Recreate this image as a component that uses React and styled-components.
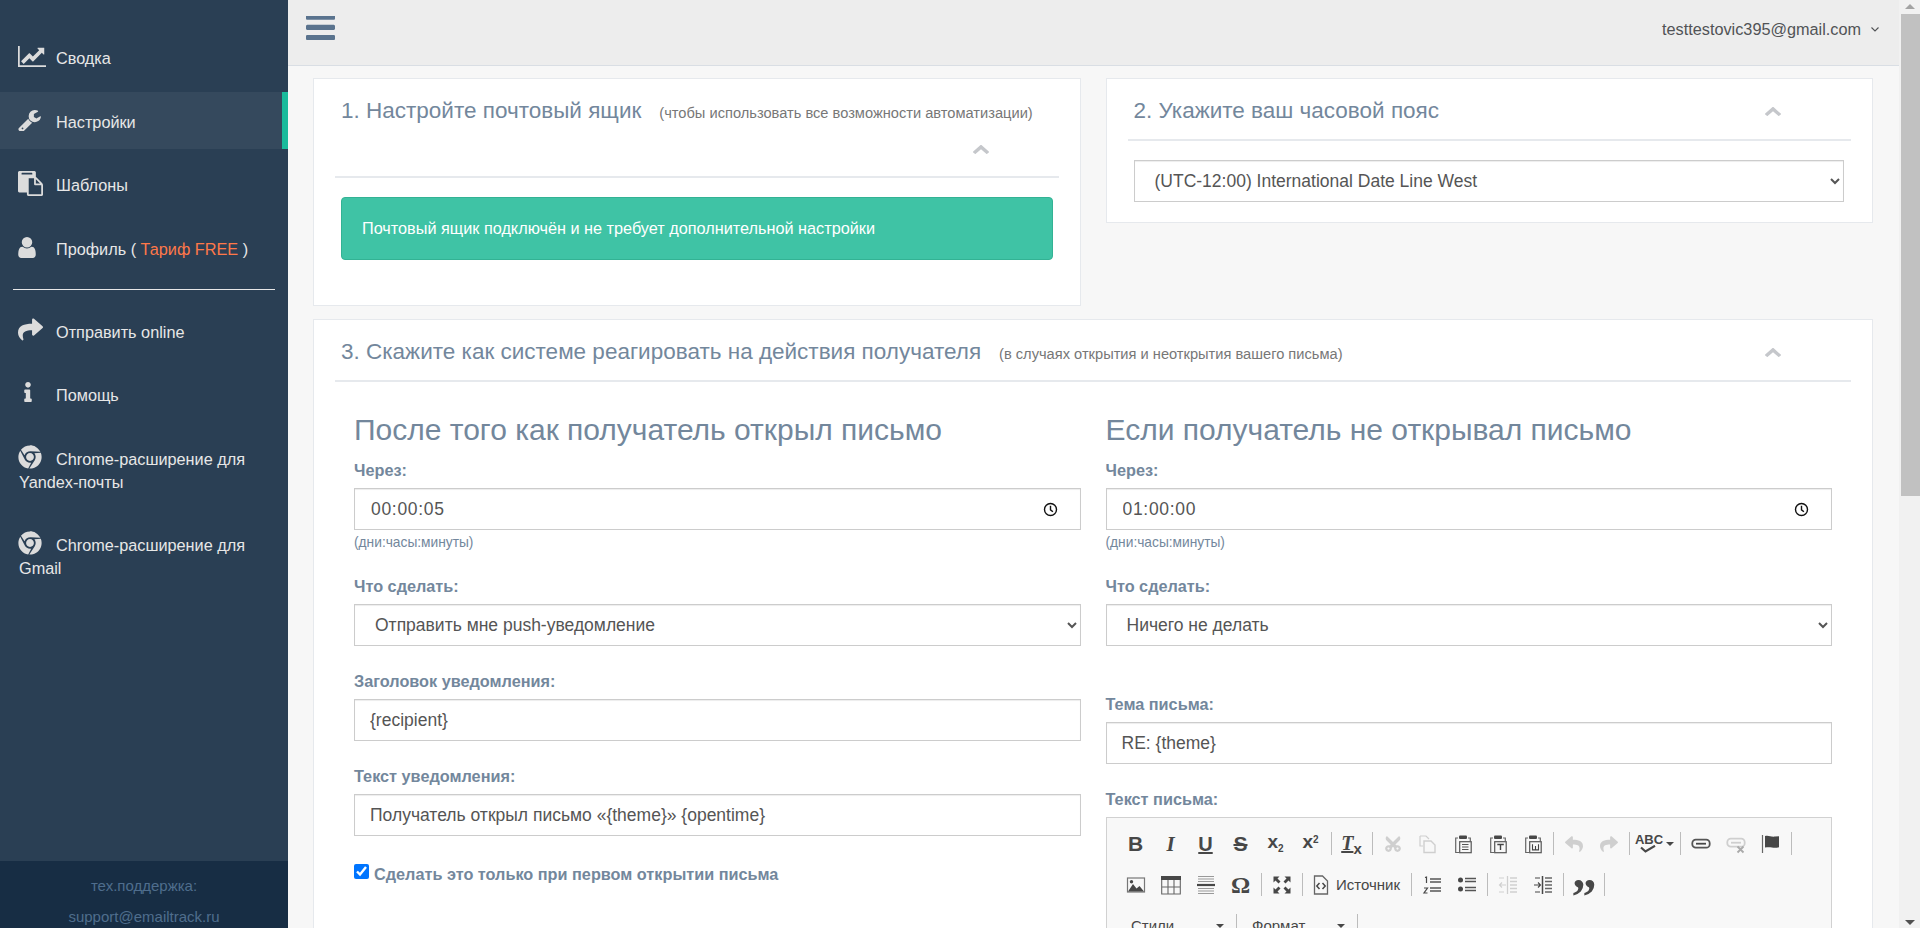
import React from 'react'
import styled, { createGlobalStyle } from 'styled-components'
import { FaShare, FaInfo, FaChrome, FaReply, FaCut } from 'react-icons/fa'

const GlobalStyle = createGlobalStyle`
  html, body { margin:0; padding:0; height:100%; overflow:hidden; }
  body { font-family:"Liberation Sans", Arial, sans-serif; background:#f7f7f7; color:#73879c; }
  * { box-sizing:border-box; }
`

const Fa = ({ d, box = '0 0 1792 1792', ...rest }) => (
  <svg viewBox={box} fill="currentColor" {...rest}><path d={d} /></svg>
)

const CHART = 'M2048 1536v128h-2048v-1536h128v1408h1920zm-128-1248v435q0 21-19.5 29.5t-35.5-7.5l-121-121-633 633q-10 10-23 10t-23-10l-233-233-416 416-192-192 585-585q10-10 23-10t23 10l233 233 464-464-121-121q-16-16-7.5-35.5t29.5-19.5h435q14 0 23 9t9 23z'
const WRENCH = 'M448 1472q0-26-19-45t-45-19-45 19-19 45 19 45 45 19 45-19 19-45zm644-420l-682 682q-37 37-90 37-52 0-91-37l-106-108q-38-36-38-90 0-53 38-91l681-681q39 98 114.5 173.5t173.5 114.5zm634-435q0 39-23 106-47 134-164.5 217.5t-258.5 83.5q-185 0-316.5-131.5t-131.5-316.5 131.5-316.5 316.5-131.5q58 0 121.5 16.5t107.5 46.5q16 11 16 28t-16 28l-293 169v224l193 107q5-3 79-48.5t135.5-81 70.5-35.5q15 0 23.5 10t8.5 25z'
const PASTE = 'M768 1664h896v-640h-416q-40 0-68-28t-28-68v-416h-384v1152zm256-1440v-64q0-13-9.5-22.5t-22.5-9.5h-704q-13 0-22.5 9.5t-9.5 22.5v64q0 13 9.5 22.5t22.5 9.5h704q13 0 22.5-9.5t9.5-22.5zm256 672h299l-299-299v299zm512 128v672q0 40-28 68t-68 28h-960q-40 0-68-28t-28-68v-160h-544q-40 0-68-28t-28-68v-1344q0-40 28-68t68-28h1088q40 0 68 28t28 68v328q21 13 36 28l408 408q28 28 48 76t20 88z'
const USER = 'M1536 1399q0 109-62.5 187t-150.5 78h-854q-88 0-150.5-78t-62.5-187q0-85 8.5-160.5t31.5-152 58.5-131 94-89 134.5-34.5q131 128 313 128t313-128q76 0 134.5 34.5t94 89 58.5 131 31.5 152 8.5 160.5zm-256-887q0 159-112.5 271.5t-271.5 112.5-271.5-112.5-112.5-271.5 112.5-271.5 271.5-112.5 271.5 112.5 112.5 271.5z'
const BARS = 'M1664 1344v128q0 26-19 45t-45 19h-1408q-26 0-45-19t-19-45v-128q0-26 19-45t45-19h1408q26 0 45 19t19 45zm0-512v128q0 26-19 45t-45 19h-1408q-26 0-45-19t-19-45v-128q0-26 19-45t45-19h1408q26 0 45 19t19 45zm0-512v128q0 26-19 45t-45 19h-1408q-26 0-45-19t-19-45v-128q0-26 19-45t45-19h1408q26 0 45 19t19 45z'
const CHEVRON = 'M1683 1331l-166 165q-19 19-45 19t-45-19l-531-531-531 531q-19 19-45 19t-45-19l-166-165q-19-19-19-45.5t19-45.5l742-741q19-19 45-19t45 19l742 741q19 19 19 45.5t-19 45.5z'

const App = () => (
  <Shell>
    <GlobalStyle />
    <Sidebar>
      <Nav>
        <NavItem>
          <NavIcon $top={-3}><Fa d={CHART} box="0 0 2048 1792" width="28" height="25" /></NavIcon>Сводка
        </NavItem>
        <NavItem $active>
          <NavIcon $top={-1}><Fa d={WRENCH} box="64 128 1662 1536" width="23" height="21" /></NavIcon>Настройки
        </NavItem>
        <NavItem>
          <NavIcon $top={-3}><Fa d={PASTE} width="25" height="25" /></NavIcon>Шаблоны
        </NavItem>
        <NavItem>
          <NavIcon $top={-1}><Fa d={USER} box="256 128 1280 1536" width="18" height="21" /></NavIcon>Профиль ( <Tariff>Тариф FREE</Tariff> )
        </NavItem>
        <NavRule />
        <NavItem>
          <NavIcon $top={-4}><FaShare size={25} /></NavIcon>Отправить online
        </NavItem>
        <NavItem>
          <NavIcon $top={-2}><FaInfo size={20} /></NavIcon>Помощь
        </NavItem>
        <NavItem>
          <NavIcon $top={-3}><FaChrome size={24} /></NavIcon>Chrome-расширение для Yandex-почты
        </NavItem>
        <NavItem>
          <NavIcon $top={-3}><FaChrome size={24} /></NavIcon>Chrome-расширение для Gmail
        </NavItem>
      </Nav>
      <SupportBox>
        <div>тех.поддержка:</div>
        <div>support@emailtrack.ru</div>
      </SupportBox>
    </Sidebar>

    <Main>
      <TopBar>
        <BurgerIcon d={BARS} box="128 320 1536 1216" width="29" height="24" preserveAspectRatio="none" />
        <UserMenu>
          testtestovic395@gmail.com
          <svg width="8" height="5" viewBox="0 0 8 5" fill="none" stroke="currentColor" strokeWidth="1.1"><path d="M.5.5 4 4 7.5.5" /></svg>
        </UserMenu>
      </TopBar>

      <Content>
        <Panel>
          <PanelHead>
            <PanelTitle>1. Настройте почтовый ящик<TitleNote>(чтобы использовать все возможности автоматизации)</TitleNote></PanelTitle>
            <Collapse />
          </PanelHead>
          <SuccessBox>Почтовый ящик подключён и не требует дополнительной настройки</SuccessBox>
        </Panel>

        <Panel>
          <PanelHead>
            <PanelTitle>2. Укажите ваш часовой пояс</PanelTitle>
            <Collapse />
          </PanelHead>
          <ZoneSelect defaultValue="-12">
            <option value="-12">(UTC-12:00) International Date Line West</option>
          </ZoneSelect>
        </Panel>

        <WidePanel>
          <PanelHead>
            <PanelTitle>3. Скажите как системе реагировать на действия получателя<TitleNote>(в случаях открытия и неоткрытия вашего письма)</TitleNote></PanelTitle>
            <Collapse />
          </PanelHead>
          <Columns>
            <div>
              <ColumnTitle>После того как получатель открыл письмо</ColumnTitle>
              <Field label="Через:" hint>
                <TimeField value="00:00:05" />
              </Field>
              <Field label="Что сделать:">
                <Select defaultValue="push">
                  <option value="push">Отправить мне push-уведомление</option>
                </Select>
              </Field>
              <Field label="Заголовок уведомления:">
                <TextInput defaultValue="{recipient}" />
              </Field>
              <Field label="Текст уведомления:">
                <TextInput defaultValue="Получатель открыл письмо «{theme}» {opentime}" />
              </Field>
              <CheckRow>
                <input type="checkbox" defaultChecked />
                Сделать это только при первом открытии письма
              </CheckRow>
            </div>
            <div>
              <ColumnTitle>Если получатель не открывал письмо</ColumnTitle>
              <Field label="Через:" hint>
                <TimeField value="01:00:00" />
              </Field>
              <Field label="Что сделать:" $extra>
                <Select defaultValue="none">
                  <option value="none">Ничего не делать</option>
                </Select>
              </Field>
              <Field label="Тема письма:">
                <TextInput defaultValue="RE: {theme}" />
              </Field>
              <FieldLabel>Текст письма:</FieldLabel>
              <Editor />
            </div>
          </Columns>
        </WidePanel>
      </Content>
    </Main>

    <ScrollBar>
      <ScrollUp />
      <ScrollThumb />
      <ScrollDown />
    </ScrollBar>
  </Shell>
)

export default App

const Collapse = () => (
  <CollapseBox>
    <Fa d={CHEVRON} box="90 256 1612 1259" width="16" height="11" preserveAspectRatio="none" />
  </CollapseBox>
)

const Field = ({ label, hint, $extra, children }) => (
  <FieldWrap $extra={$extra}>
    <FieldLabel>{label}</FieldLabel>
    {children}
    {hint && <Hint>(дни:часы:минуты)</Hint>}
  </FieldWrap>
)

const TimeField = ({ value }) => (
  <TimeBox>
    <TimeValue defaultValue={value} />
    <svg width="15" height="15" viewBox="0 0 15 15" fill="none" stroke="#111" strokeWidth="1.4">
      <circle cx="7.5" cy="7.5" r="6" />
      <path d="M7.5 3.8v4l2.4 2" />
    </svg>
  </TimeBox>
)

/* ckeditor toolbar */
const PasteIcon = ({ children }) => (
  <Ico>
    <path d="M5 4H2.700v14.500H6M15 4h2.300v3" fill="none" stroke="#666" strokeWidth="1.200" />
    <rect x="6" y="1.500" width="8" height="3.500" rx="1" fill="currentColor" />
    <rect x="6.700" y="7.700" width="11.500" height="11" fill="none" stroke="#555" strokeWidth="1.200" />
    {children}
  </Ico>
)

const Editor = () => (
  <EditorBox>
    <ToolRow>
      <ToolBtn><Letter $size={21} $bold>B</Letter></ToolBtn>
      <ToolBtn><Letter $size={21} $bold $italic $serif>I</Letter></ToolBtn>
      <ToolBtn><Letter $size={20} $bold $under>U</Letter></ToolBtn>
      <ToolBtn><Letter $size={21} $bold $strike>S</Letter></ToolBtn>
      <ToolBtn><Letter $size={19} $bold>x<Small $down>2</Small></Letter></ToolBtn>
      <ToolBtn><Letter $size={19} $bold>x<Small>2</Small></Letter></ToolBtn>
      <ToolSep />
      <ToolBtn><Letter $size={20} $bold $italic $serif $under>T<Small $down $large>x</Small></Letter></ToolBtn>
      <ToolSep />
      <ToolBtn><Cut size={18} /></ToolBtn>
      <ToolBtn>
        <Ico $off>
          <path d="M2 2h6l3 3M2 2v10h3" fill="none" stroke="currentColor" strokeWidth="1.200" />
          <path d="M6 7h7l4 4v7.500H6z" fill="none" stroke="currentColor" strokeWidth="1.400" />
        </Ico>
      </ToolBtn>
      <ToolBtn>
        <PasteIcon><path d="M9 10.500h6.500M9 13h6.500M9 15.500h6.500" stroke="#555" strokeWidth="1.100" /></PasteIcon>
      </ToolBtn>
      <ToolBtn>
        <PasteIcon><path d="M9.300 10.500h6.500M12.500 10.500v5.600" stroke="#444" strokeWidth="1.400" /></PasteIcon>
      </ToolBtn>
      <ToolBtn>
        <PasteIcon><path d="M9.500 10.300v5.600h6v-5.600M12.500 12v3.600" fill="none" stroke="#444" strokeWidth="1.100" /></PasteIcon>
      </ToolBtn>
      <ToolSep />
      <ToolBtn><ReplyIcon size={18} /></ToolBtn>
      <ToolBtn><RedoIcon size={18} /></ToolBtn>
      <ToolSep />
      <SpellBtn>
        <SpellMark>
          <AbcText>ABC</AbcText>
          <svg width="17" height="8" viewBox="0 0 17 8" fill="none" stroke="#474747" strokeWidth="2.200"><path d="M1 2.500 5.500 6.500 15 .8" /></svg>
        </SpellMark>
        <Caret />
      </SpellBtn>
      <ToolSep />
      <ToolBtn>
        <Ico>
          <rect x="1.300" y="5.700" width="17.400" height="8" rx="3.500" fill="none" stroke="#555" strokeWidth="1.800" />
          <path d="M5 9.700h10" stroke="currentColor" strokeWidth="1.800" />
        </Ico>
      </ToolBtn>
      <ToolBtn>
        <Ico $off>
          <rect x="1.300" y="4.700" width="17.400" height="8" rx="3.500" fill="none" stroke="currentColor" strokeWidth="1.800" />
          <path d="M5 8.700h10" stroke="currentColor" strokeWidth="1.800" />
          <path d="M11.500 12.500l6 6M17.500 12.500l-6 6" stroke="#aaa" strokeWidth="1.800" />
        </Ico>
      </ToolBtn>
      <ToolBtn>
        <Ico>
          <path d="M1.500 1v18" stroke="#666" strokeWidth="1.200" />
          <path d="M4 2c4-1 5 1 10 .6l4-.4v11c-6 1.500-8-1-14 .4z" fill="currentColor" />
        </Ico>
      </ToolBtn>
      <ToolSep />
    </ToolRow>

    <ToolRow>
      <ToolBtn>
        <Ico>
          <rect x="1.500" y="3" width="17" height="14" fill="none" stroke="#777" strokeWidth="1.200" />
          <path d="M2 16.500 7 9l3.500 4.500 3-2.500 4.500 5.500z" fill="currentColor" />
          <circle cx="5.500" cy="6.800" r="1.700" fill="currentColor" />
        </Ico>
      </ToolBtn>
      <ToolBtn>
        <Ico>
          <rect x="0" y="1" width="20" height="4" fill="currentColor" />
          <path d="M.7 5v14h18.600V5M.7 12h18.600M7 5v14M13 5v14" fill="none" stroke="#666" strokeWidth="1.100" />
        </Ico>
      </ToolBtn>
      <ToolBtn>
        <Ico>
          <path d="M2 1.500h16M2 4h16M2 6.500h16M2 13.500h16M2 16h16M2 18.500h16" stroke="#999" strokeWidth="1" />
          <path d="M1 10h18" stroke="currentColor" strokeWidth="2.200" />
        </Ico>
      </ToolBtn>
      <ToolBtn><Letter $size={24} $bold $serif>Ω</Letter></ToolBtn>
      <ToolSep />
      <ToolBtn>
        <Ico>
          <path d="M1.500 1.500h6l-2 2 3 3-2 2-3-3-2 2zM18.500 1.500v6l-2-2-3 3-2-2 3-3-2-2zM1.500 18.500v-6l2 2 3-3 2 2-3 3 2 2zM18.500 18.500h-6l2-2-3-3 2-2 3 3 2-2z" fill="currentColor" />
        </Ico>
      </ToolBtn>
      <ToolSep />
      <SourceBtn>
        <Ico>
          <path d="M3.500 1h8l5 5v13h-13z" fill="none" stroke="#666" strokeWidth="1.300" />
          <path d="M8.500 8 5.800 11l2.700 3M11.500 8l2.700 3-2.700 3" fill="none" stroke="currentColor" strokeWidth="1.500" />
        </Ico>
        Источник
      </SourceBtn>
      <ToolSep />
      <ToolBtn>
        <Ico>
          <path d="M8 4h11M8 7h11M8 13h11M8 16h11" stroke="#555" strokeWidth="1.300" />
          <path d="M3 2.500 4.500 2v6M2 13h3.500l-3.500 5h3.500" fill="none" stroke="currentColor" strokeWidth="1.200" />
        </Ico>
      </ToolBtn>
      <ToolBtn>
        <Ico>
          <circle cx="3.500" cy="5" r="2.500" fill="currentColor" />
          <circle cx="3.500" cy="14" r="2.500" fill="currentColor" />
          <path d="M8 3.500h11M8 6.500h11M8 12.500h11M8 15.500h11" stroke="#555" strokeWidth="1.300" />
        </Ico>
      </ToolBtn>
      <ToolSep />
      <ToolBtn>
        <Ico $off>
          <path d="M9.500 1v18M12 3h7M12 6.500h7M12 10h7M12 13.500h7M12 17h7" stroke="currentColor" strokeWidth="1.300" />
          <path d="M8 10H1.500M4 7.500 1.500 10 4 12.500M1 3h5M1 17h5" fill="none" stroke="currentColor" strokeWidth="1.100" />
        </Ico>
      </ToolBtn>
      <ToolBtn>
        <Ico>
          <path d="M9.500 1v18" stroke="currentColor" strokeWidth="1.500" />
          <path d="M12 3h7M12 6.500h7M12 10h7M12 13.500h7M12 17h7" stroke="#666" strokeWidth="1.300" />
          <path d="M1 10h6.500M5 7.500 7.500 10 5 12.500M2 3h5M2 17h5" fill="none" stroke="currentColor" strokeWidth="1.100" />
        </Ico>
      </ToolBtn>
      <ToolSep />
      <ToolBtn><QuoteMark>”</QuoteMark></ToolBtn>
      <ToolSep />
    </ToolRow>

    <ToolRow>
      <Combo>Стили<Caret /></Combo>
      <ToolSep />
      <Combo>Формат<Caret /></Combo>
      <ToolSep />
    </ToolRow>
    <EditorArea />
  </EditorBox>
)

const Shell = styled.div`
  display:flex;
  height:100vh;
  overflow:hidden;
`

const Sidebar = styled.aside`
  width:288px;
  flex:none;
  display:flex;
  flex-direction:column;
  background:#2a3f54;
  overflow:hidden;
`

const Nav = styled.nav`
  flex:1;
  padding-top:28px;
`

const NavItem = styled.div`
  margin-bottom:6.5px;
  padding:19px 19px 15px 19px;
  font-size:16.25px;
  line-height:23px;
  color:#e7e7e7;
  background:${props => props.$active ? '#35495d' : 'transparent'};
  border-right:6px solid ${props => props.$active ? '#1abb9c' : 'transparent'};
`

const NavIcon = styled.span`
  display:inline-block;
  width:37px;
  height:23px;
  vertical-align:top;
  color:#dcdcdc;
  svg { display:block; margin:${props => props.$top}px 0 0 -1px; }
`

const Tariff = styled.span`
  color:#ff7849;
`

const NavRule = styled.div`
  height:1px;
  margin:13px 13px 12px;
  background:#e7e7e7;
`

const SupportBox = styled.div`
  height:67px;
  flex:none;
  padding-top:9px;
  background:#172d44;
  color:#4f6d8d;
  font-size:15px;
  line-height:31px;
  text-align:center;
`

const Main = styled.main`
  flex:1;
  min-width:0;
  height:100vh;
  overflow:hidden;
`

/* the browser hides real scrollbars in the screenshot, so draw one */
const ScrollBar = styled.div`
  width:21px;
  flex:none;
  display:flex;
  flex-direction:column;
  background:#f1f1f1;
`

const ScrollThumb = styled.div`
  height:482px;
  margin-left:2px;
  background:#c1c1c1;
`

const ScrollUp = styled.div`
  width:0;
  height:0;
  margin:4px 0 5px 6px;
  border-left:5px solid transparent;
  border-right:5px solid transparent;
  border-bottom:5px solid #a3a3a3;
`

const ScrollDown = styled.div`
  width:0;
  height:0;
  margin:auto 0 3px 6px;
  border-left:5px solid transparent;
  border-right:5px solid transparent;
  border-top:5px solid #505050;
`

const TopBar = styled.header`
  height:66px;
  display:flex;
  align-items:flex-start;
  justify-content:space-between;
  padding:16px 20px 0 18px;
  background:#ededed;
  border-bottom:1px solid #d9dee4;
`

const BurgerIcon = styled(Fa)`
  color:#5a738e;
`

const UserMenu = styled.div`
  display:flex;
  align-items:center;
  gap:10px;
  height:26px;
  font-size:16.25px;
  color:#515356;
`

const Content = styled.div`
  display:grid;
  grid-template-columns:1fr 1fr;
  column-gap:25px;
  row-gap:13px;
  align-items:start;
  padding:12px 26px 15px 25px;
`

const Panel = styled.section`
  padding:11px 21px 20px;
  background:#fff;
  border:1px solid #e6e9ed;
`

const WidePanel = styled(Panel)`
  grid-column:1 / -1;
`

const PanelHead = styled.div`
  display:flex;
  flex-wrap:wrap;
  align-items:center;
  padding-bottom:9px;
  margin-bottom:19px;
  border-bottom:2px solid #e6e9ed;
`

const PanelTitle = styled.h2`
  margin:0;
  padding:1px 0 0 6px;
  font-size:22.5px;
  font-weight:400;
  line-height:39px;
  color:#73879c;
`

const TitleNote = styled.small`
  margin-left:18px;
  font-size:14.65px;
  line-height:1;
  color:#777;
`

const CollapseBox = styled.div`
  display:flex;
  align-items:center;
  height:37px;
  margin-left:auto;
  margin-right:70px;
  color:#c5c7cb;
`

const SuccessBox = styled.div`
  display:flex;
  align-items:center;
  height:63px;
  margin:0 6px 25px;
  padding-left:20px;
  background:#3fc3a5;
  border:1px solid #33b294;
  border-radius:4px;
  font-size:16.25px;
  color:#fff;
`

const Select = styled.select`
  display:block;
  width:100%;
  height:42px;
  padding:0 16px;
  background:#fff;
  border:1px solid #ccc;
  border-radius:0;
  box-shadow:inset 0 1px 1px rgba(0,0,0,.075);
  font-family:inherit;
  font-size:17.5px;
  color:#555;
`

const ZoneSelect = styled(Select)`
  width:calc(100% - 13px);
  margin:0 6px;
`

const Columns = styled.div`
  display:grid;
  grid-template-columns:1fr 1fr;
  column-gap:25px;
  padding:0 19px;
`

const ColumnTitle = styled.h3`
  margin:12px 0 14px;
  font-size:30px;
  font-weight:400;
  line-height:33px;
  color:#73879c;
`

const FieldWrap = styled.div`
  margin-bottom:${props => props.$extra ? '48px' : '25px'};
`

const FieldLabel = styled.label`
  display:block;
  margin-bottom:8px;
  font-size:16.25px;
  font-weight:700;
  line-height:20px;
  color:#73879c;
`

const Hint = styled.div`
  margin-top:5px;
  margin-bottom:2px;
  font-size:13.75px;
  line-height:16px;
  color:#73879c;
`

const TextInput = styled.input`
  display:block;
  width:100%;
  height:42px;
  padding:0 15px;
  background:#fff;
  border:1px solid #ccc;
  box-shadow:inset 0 1px 1px rgba(0,0,0,.075);
  font-family:inherit;
  font-size:17.5px;
  color:#555;
  outline:none;
`

const TimeBox = styled.div`
  display:flex;
  align-items:center;
  height:42px;
  padding:0 22px 0 16px;
  background:#fff;
  border:1px solid #ccc;
  box-shadow:inset 0 1px 1px rgba(0,0,0,.075);
`

const TimeValue = styled.input`
  flex:1;
  min-width:0;
  padding:0;
  border:0;
  outline:none;
  background:transparent;
  font-family:inherit;
  font-size:17.5px;
  letter-spacing:.7px;
  color:#555;
`

const CheckRow = styled.label`
  display:flex;
  align-items:flex-start;
  gap:5px;
  margin-top:28px;
  font-size:16.25px;
  font-weight:700;
  line-height:20px;
  color:#73879c;
  input { width:15px; height:15px; margin:0; flex:none; }
`

const EditorBox = styled.div`
  padding-top:5px;
  background:#f8f8f8;
  border:1px solid #d1d1d1;
`

const ToolRow = styled.div`
  display:flex;
  align-items:center;
  height:41px;
  padding-left:11.5px;
  color:#474747;
`

const ToolBtn = styled.div`
  display:flex;
  align-items:center;
  justify-content:center;
  width:35px;
  flex:none;
`

const SpellBtn = styled(ToolBtn)`
  width:45px;
  gap:3px;
`

const SourceBtn = styled(ToolBtn)`
  width:103.5px;
  justify-content:flex-start;
  padding-left:6px;
  gap:5px;
  font-size:15px;
`

const ToolSep = styled.div`
  width:1px;
  height:23px;
  margin:0 2.5px;
  flex:none;
  background:#bcbcbc;
`

const Ico = styled.svg.attrs({ viewBox:'0 0 20 20', width:20, height:20 })`
  display:block;
  flex:none;
  color:${props => props.$off ? '#cfcfcf' : '#474747'};
`

const Cut = styled(FaCut)`
  color:#cfcfcf;
  transform:rotate(-90deg);
`

const ReplyIcon = styled(FaReply)`
  color:#cfcfcf;
`

const RedoIcon = styled(FaShare)`
  color:#cfcfcf;
`

const Letter = styled.span`
  font-family:${props => props.$serif ? '"Liberation Serif", serif' : 'inherit'};
  font-size:${props => props.$size}px;
  font-weight:${props => props.$bold ? 700 : 400};
  font-style:${props => props.$italic ? 'italic' : 'normal'};
  line-height:22px;
  color:#474747;
  text-decoration:${props => props.$under ? 'underline' : props.$strike ? 'line-through' : 'none'};
`

const Small = styled.span`
  position:relative;
  top:${props => props.$down ? '4px' : '-5px'};
  font-family:"Liberation Sans", sans-serif;
  font-size:${props => props.$large ? '15px' : '10px'};
  font-style:normal;
`

const SpellMark = styled.span`
  display:flex;
  flex-direction:column;
  align-items:center;
`

const AbcText = styled.span`
  font-size:13px;
  font-weight:700;
  line-height:11px;
  color:#474747;
`

const QuoteMark = styled.span`
  height:22px;
  font-family:"Liberation Serif", serif;
  font-size:50px;
  font-weight:700;
  line-height:45px;
  color:#474747;
`

const Caret = styled.span`
  flex:none;
  width:0;
  height:0;
  border-left:4px solid transparent;
  border-right:4px solid transparent;
  border-top:4px solid #474747;
`

const Combo = styled.div`
  display:flex;
  align-items:center;
  justify-content:space-between;
  width:115px;
  flex:none;
  padding:0 9px 0 13px;
  font-size:15px;
  color:#474747;
`

const EditorArea = styled.div`
  height:500px;
  background:#fff;
  border-top:1px solid #d1d1d1;
`
